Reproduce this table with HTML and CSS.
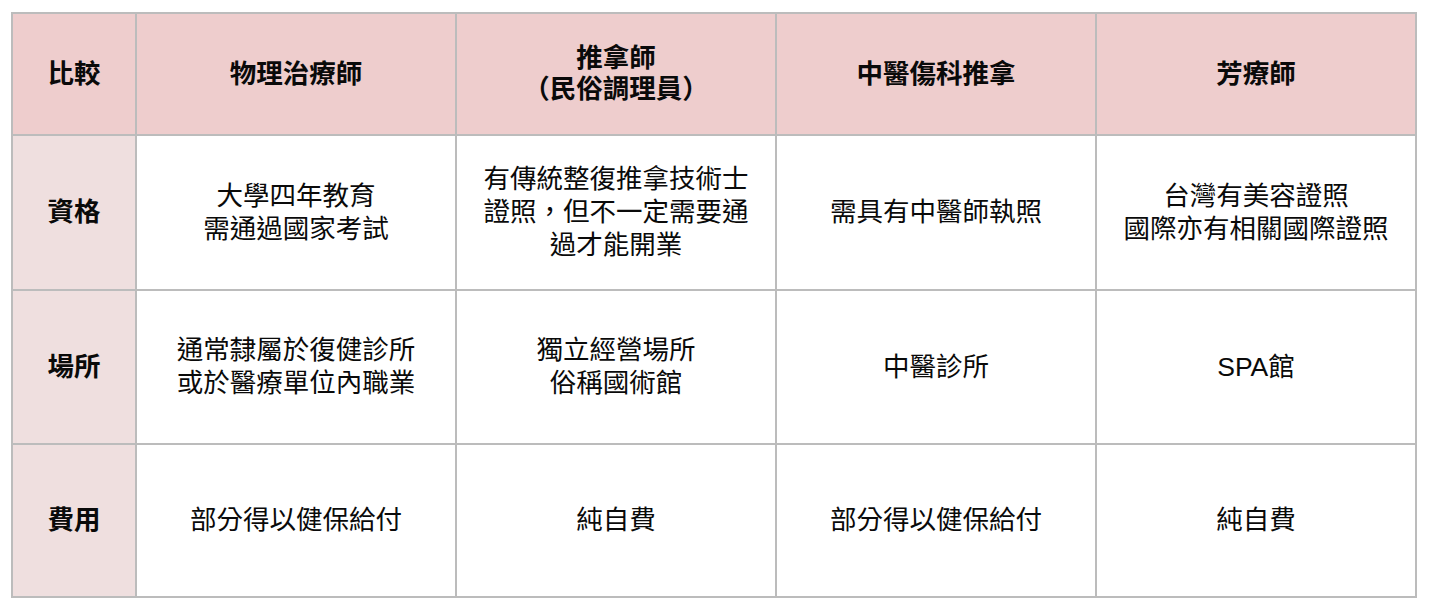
FILE: index.html
```html
<!DOCTYPE html>
<html lang="zh-Hant">
<head>
<meta charset="utf-8">
<title>比較</title>
<link rel="stylesheet" href="styles.css">
</head>
<body>
<table class="compare">
  <colgroup>
    <col class="col-label">
    <col class="col-item">
    <col class="col-item">
    <col class="col-item">
    <col class="col-item">
  </colgroup>
  <thead>
    <tr class="row-head">
      <th>比較</th>
      <th>物理治療師</th>
      <th>推拿師<br>（民俗調理員）</th>
      <th>中醫傷科推拿</th>
      <th>芳療師</th>
    </tr>
  </thead>
  <tbody>
    <tr class="row-1">
      <th class="side">資格</th>
      <td>大學四年教育<br>需通過國家考試</td>
      <td>有傳統整復推拿技術士證照，但不一定需要通過才能開業</td>
      <td>需具有中醫師執照</td>
      <td>台灣有美容證照<br>國際亦有相關國際證照</td>
    </tr>
    <tr class="row-2">
      <th class="side">場所</th>
      <td>通常隸屬於復健診所<br>或於醫療單位內職業</td>
      <td>獨立經營場所<br>俗稱國術館</td>
      <td>中醫診所</td>
      <td>SPA館</td>
    </tr>
    <tr class="row-3">
      <th class="side">費用</th>
      <td>部分得以健保給付</td>
      <td>純自費</td>
      <td>部分得以健保給付</td>
      <td>純自費</td>
    </tr>
  </tbody>
</table>
</body>
</html>
```

FILE: styles.css
```css
html, body {
  margin: 0;
  padding: 0;
  background: #ffffff;
}

body {
  padding: 12px 0 0 11px;
  font-family: "Liberation Sans", "Noto Sans CJK TC", sans-serif;
  color: #0a0a0a;
}

.compare {
  table-layout: fixed;
  width: 1406px;
  border-collapse: separate;
  border-spacing: 2px;
  background: #bcbcbc;
}

.col-label { width: 122px; }
.col-item { width: 318px; }

.compare th,
.compare td {
  padding: 0 22px;
  text-align: center;
  vertical-align: middle;
  font-size: 26.5px;
  line-height: 33px;
  background: #ffffff;
  font-weight: 400;
}

.compare thead th {
  background: #eecdcd;
  font-weight: 700;
  line-height: 31px;
}

.compare tbody th.side {
  background: #efdfdf;
  font-weight: 700;
  padding: 0;
}

.row-head { height: 120px; }
.row-1 { height: 153px; }
.row-2 { height: 152px; }
.row-3 { height: 151px; }
```
